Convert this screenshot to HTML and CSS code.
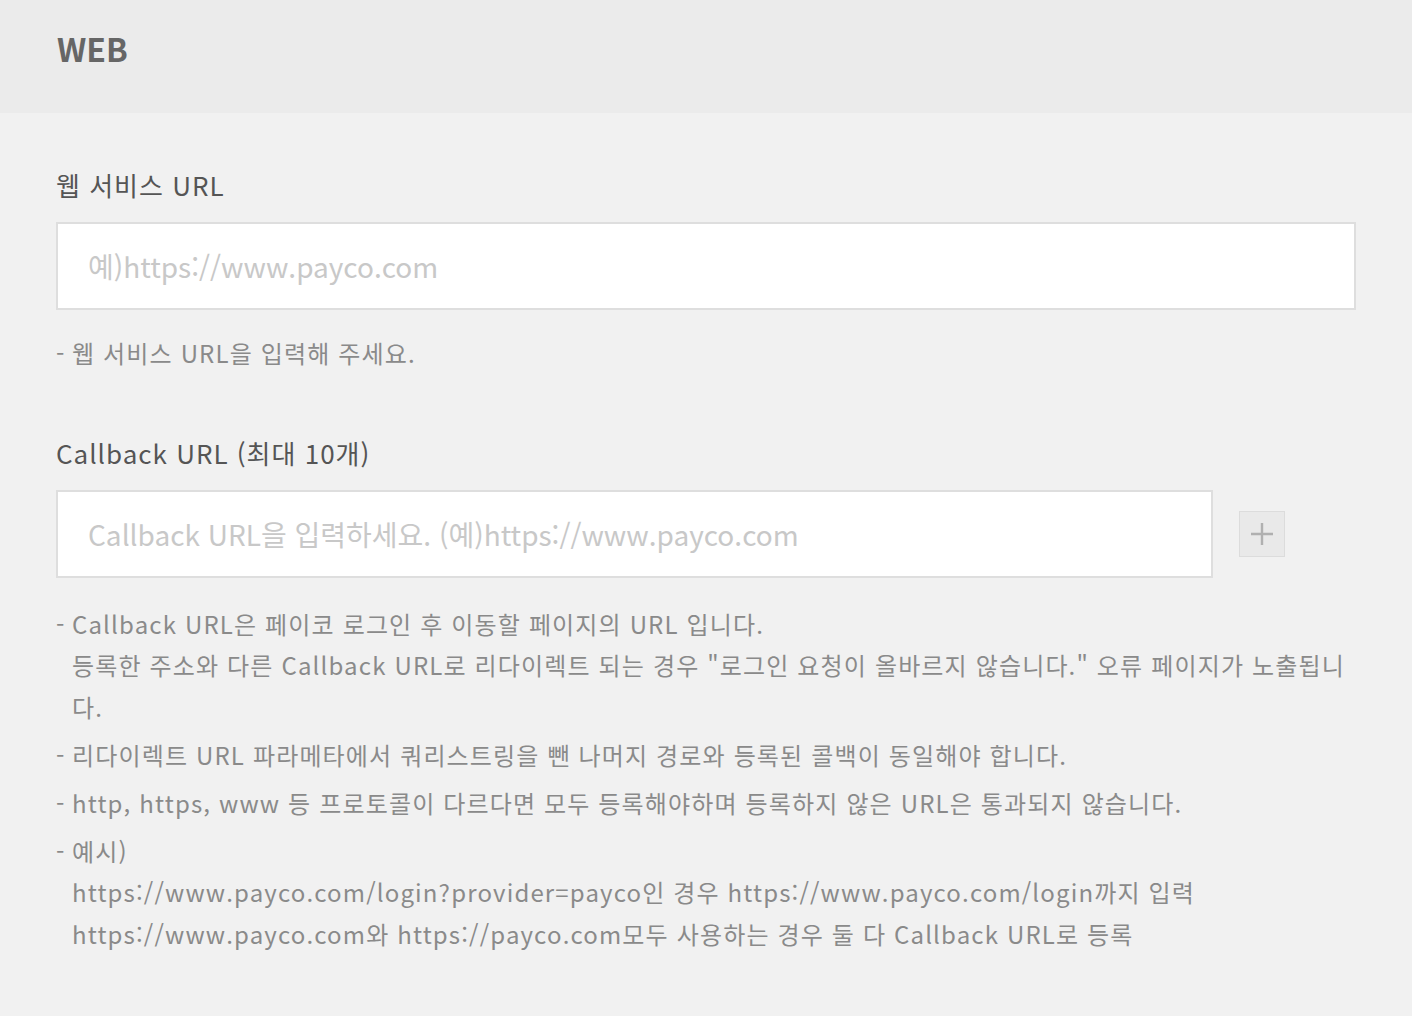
FILE: index.html
```html
<!DOCTYPE html>
<html lang="ko">
<head>
<meta charset="utf-8">
<title>WEB</title>
<link rel="stylesheet" href="styles.css">
</head>
<body>
<header class="head">
  <h1 class="head-title">WEB</h1>
</header>
<main class="content">
  <section class="field">
    <label class="field-label">웹 서비스 URL</label>
    <input class="text-input" type="text" placeholder="예)https://www.payco.com">
    <ul class="help help-single">
      <li>웹 서비스 URL을 입력해 주세요.</li>
    </ul>
  </section>
  <section class="field field-callback">
    <label class="field-label">Callback URL (최대 10개)</label>
    <div class="input-row">
      <input class="text-input" type="text" placeholder="Callback URL을 입력하세요. (예)https://www.payco.com">
      <button class="add-btn" type="button" aria-label="추가">
        <svg width="26" height="26" viewBox="0 0 26 26"><path d="M13 2v22M2 13h22" stroke="#b0b0b0" stroke-width="2.4" fill="none"/></svg>
      </button>
    </div>
    <ul class="help help-list">
      <li>Callback URL은 페이코 로그인 후 이동할 페이지의 URL 입니다.<br>등록한 주소와 다른 Callback URL로 리다이렉트 되는 경우 "로그인 요청이 올바르지 않습니다." 오류 페이지가 노출됩니다.</li>
      <li>리다이렉트 URL 파라메타에서 쿼리스트링을 뺀 나머지 경로와 등록된 콜백이 동일해야 합니다.</li>
      <li>http, https, www 등 프로토콜이 다르다면 모두 등록해야하며 등록하지 않은 URL은 통과되지 않습니다.</li>
      <li>예시)<br>https://www.payco.com/login?provider=payco인 경우 https://www.payco.com/login까지 입력<br>https://www.payco.com와 https://payco.com모두 사용하는 경우 둘 다 Callback URL로 등록</li>
    </ul>
  </section>
</main>
</body>
</html>
```
FILE: styles.css
```css
* { box-sizing: border-box; }
html, body {
  margin: 0;
  padding: 0;
  background: #f1f1f1;
  font-family: "Noto Sans CJK KR", "Noto Sans", sans-serif;
}
.head {
  height: 113px;
  background: #ebebeb;
  padding-left: 57px;
}
.head-title {
  margin: 0;
  font-size: 32px;
  line-height: 96px;
  font-weight: 700;
  color: #666;
}
.content {
  padding: 54px 56px 40px 56px;
}
.field-label {
  display: block;
  font-size: 26px;
  line-height: 36px;
  color: #555;
  letter-spacing: 1px;
}
.text-input {
  display: block;
  width: 100%;
  height: 88px;
  margin-top: 19px;
  border: 2px solid #dedede;
  background: #fff;
  padding: 0 30px;
  font-family: inherit;
  font-size: 28px;
  color: #444;
  outline: none;
  letter-spacing: 0;
}
.text-input::placeholder { color: #c8c8c8; }
.help {
  list-style: none;
  margin: 22px 0 0 0;
  padding: 0 0 0 16px;
  font-size: 24px;
  line-height: 41.5px;
  color: #8a8a8a;
  letter-spacing: 1.15px;
}
.help li { position: relative; }
.help li::before {
  content: "-";
  position: absolute;
  left: -16px;
  top: 0;
}
.help-list { margin-top: 25px; }
.help-list li + li { margin-top: 6.5px; }
.field-callback { margin-top: 61px; }
.input-row {
  display: flex;
  align-items: center;
  margin-top: 19px;
}
.input-row .text-input {
  flex: 1;
  margin-top: 0;
}
.add-btn {
  width: 46px;
  height: 46px;
  margin: 0 71px 0 26px;
  padding: 0;
  border: 1px solid #dcdcdc;
  background: #e9e9e9;
  display: flex;
  align-items: center;
  justify-content: center;
  flex-shrink: 0;
}
```
